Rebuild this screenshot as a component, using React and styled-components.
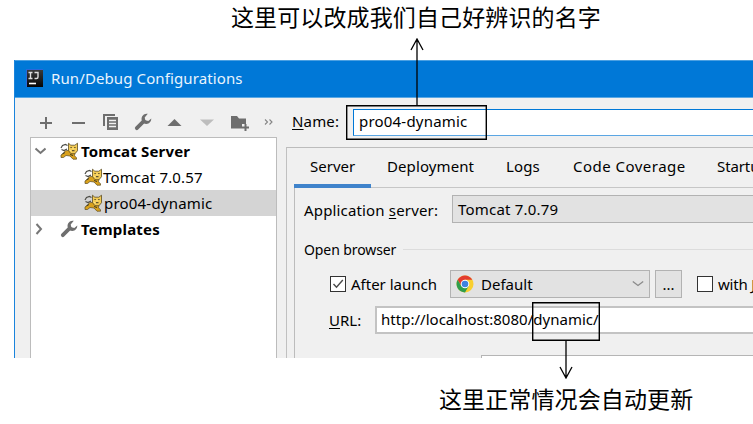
import React from 'react';
import styled, { createGlobalStyle } from 'styled-components';

const GlobalStyle = createGlobalStyle`
  * { box-sizing: border-box; }
  body { margin: 0; background: #fff; overflow: hidden; }
`;

const Page = styled.div`
  position: relative;
  width: 753px;
  height: 424px;
  overflow: hidden;
  background: #fff;
  color: #000;
  font: 15px/20px "Noto Sans", "Noto Sans CJK SC", sans-serif;
`;

const Caption = styled.div`
  height: ${p => p.$height}px;
  padding: ${p => p.$top}px 0 0 ${p => p.$left}px;
  font: 23px/26px "Noto Sans CJK SC", sans-serif;
  letter-spacing: 0.12px;
  white-space: nowrap;
`;

const Dialog = styled.section`
  width: 739px;
  height: 298px;
  margin-left: 14px;
  display: flex;
  flex-direction: column;
  overflow: hidden;
  background: #f0f0f0;
  border-left: 1px solid #1a84dc;
`;

const TitleBar = styled.header`
  flex: none;
  height: 38px;
  margin-left: -1px;
  padding: 0 0 2px 12px;
  display: flex;
  align-items: center;
  gap: 8px;
  background: #0078d7;
  border-top: 1px solid #4ba0e2;
  border-bottom: 1px solid #5aa8e4;
  color: #e9f4fd;
`;

const Body = styled.div`
  flex: 1;
  display: flex;
  min-height: 0;
`;

const Sidebar = styled.aside`
  flex: none;
  width: 247px;
  margin-left: 15px;
  display: flex;
  flex-direction: column;
`;

const Toolbar = styled.div`
  height: 39px;
  padding: 14px 0 0 9px;
  display: flex;
  color: #6e6e6e;
`;

const Tool = styled.span`
  flex: none;
  width: ${p => p.$width || 32.2}px;
  height: 20px;
  svg { display: block; }
`;

const Tree = styled.div`
  flex: 1;
  background: #fff;
  border: 1px solid #bcbcbc;
  border-bottom: 0;
`;

const TreeRow = styled.div`
  height: 26px;
  display: flex;
  align-items: center;
  padding-left: ${p => (p.$child ? 53 : 3)}px;
  background: ${p => (p.$selected ? '#d4d4d4' : 'transparent')};
  font-weight: ${p => (p.$child ? 400 : 700)};
`;

const Twisty = styled.span`
  width: 26px;
  height: 14px;
  svg { display: block; }
`;

const RowIcon = styled.span`
  flex: none;
  width: ${p => p.$width}px;
  height: 18px;
  svg { display: block; }
`;

const Text = styled.span`
  display: block;
  white-space: pre;
  letter-spacing: ${p => p.$track || 0}px;
`;

const Key = styled.span`
  text-decoration: underline;
  text-decoration-thickness: 1px;
  text-underline-offset: 2px;
`;

const Main = styled.main`
  flex: none;
  width: 480px;
  display: flex;
  flex-direction: column;
`;

const NameRow = styled.div`
  flex: none;
  height: 49px;
  padding: 11px 0 0 15px;
  display: flex;
`;

const FieldLabel = styled.label`
  flex: none;
  width: ${p => p.$width}px;
  padding-top: ${p => p.$top}px;
`;

const Field = styled.div`
  flex: 1;
  height: ${p => p.$height}px;
  padding: ${p => p.$pad};
  background: #fff;
  border-style: solid;
  border-width: 2px 0 2px 2px;
  border-color: #c3c3c3;
  display: flex;
`;

const FocusedField = styled(Field)`
  border-width: 1px 0 1px 1px;
  border-color: #0078d7;
  border-bottom-color: #5ba6e3;
`;

const TabPane = styled.div`
  flex: none;
  margin-left: 9px;
  padding-left: 7px;
  border-left: 1px solid #c0c0c0;
  border-top: 1px solid #bcbcbc;
`;

const TabBar = styled.nav`
  height: 40px;
  display: flex;
  border-bottom: 1px solid #c6c6c6;
`;

const Tab = styled.div`
  flex: none;
  height: 40px;
  width: ${p => p.$width}px;
  padding: 8px 0 0 16px;
  border-bottom: 4px solid ${p => (p.$active ? '#3f83cb' : 'transparent')};
`;

const Form = styled.div`
  height: 170px;
  border-left: 1px solid #bcbcbc;
  padding: 7px 0 0 9px;
  display: flex;
  flex-direction: column;
`;

const FormRow = styled.div`
  flex: none;
  height: ${p => p.$height}px;
  padding-left: ${p => p.$indent || 0}px;
  display: flex;
`;

const Button = styled.div`
  flex: none;
  width: ${p => p.$width}px;
  height: 28px;
  padding: 0 ${p => p.$pad || 0}px 0 5px;
  display: flex;
  align-items: center;
  background: #e2e2e2;
  border: 1px solid #b2b2b2;
  svg { flex: none; }
`;

const Grow = styled.span`flex: 1;`;

const BrowserName = styled(Text)`
  margin: 0 0 0 7px;
`;

const Dots = styled(Button)`
  width: 27px;
  height: 28px;
  margin: 0 15px 0 5px;
  padding: 0;
  justify-content: center;
`;

const SectionTitle = styled.div`
  width: 99px;
  font-size: 14px;
`;

const Rule = styled.div`
  flex: 1;
  height: 1px;
  margin-top: 9px;
  background: #dcdcdc;
`;

const Check = styled.span`
  flex: none;
  width: 16px;
  height: 16px;
  margin: 6px 5px 0 0;
  background: #fff;
  border: 1px solid #333;
  svg { display: block; }
`;

const Offset = styled.div`padding-top: ${p => p.$top}px;`;

const NextPanel = styled.div`
  flex: none;
  height: 4px;
  margin-left: 177px;
  background: #fff;
  border-top: 1px solid #b5b5b5;
  border-left: 1px solid #b5b5b5;
`;

const Marker = styled.div`
  position: absolute;
  left: ${p => p.$x}px;
  top: ${p => p.$y}px;
  width: ${p => p.$w}px;
  height: ${p => p.$h}px;
  border: ${p => (p.$plain ? '0' : '1.5px solid #000')};
  box-shadow: ${p => (p.$plain ? 'none' : 'inset 0 0 0 0.4px #000')};
  svg { display: block; }
`;

const IdeaLogo = () => (
  <svg width="17" height="18" viewBox="0 0 17 18">
    <defs>
      <linearGradient id="idea" x1="0" y1="0" x2="0" y2="1">
        <stop offset="0" stopColor="#3a3a3a" /><stop offset="1" stopColor="#050505" />
      </linearGradient>
    </defs>
    <rect x="0" y="0" width="17" height="18" fill="#2a67dc" />
    <rect x="1" y="1" width="16" height="17" fill="url(#idea)" />
    <path d="M2.500 3.500h4M4.500 3.500v6M2.500 9.500h4M8.500 3.500H12v4.500q0 1.500-1.500 1.500H8.500" fill="none" stroke="#ddd" strokeWidth="1.400" />
    <path d="M3 14.500h7" stroke="#fff" strokeWidth="1.600" />
  </svg>
);

const Wrench = () => (
  <svg width="18" height="18" viewBox="0 0 18 18">
    <path d="M2.800 15.200L9.800 8.200" stroke="#6e6e6e" strokeWidth="3.800" strokeLinecap="round" />
    <path d="M13.800.8a5.200 5.200 0 0 0-6 6.700 5 5 0 0 0 4.600 3.500c2.900 0 5-2.400 4.900-5.600l-3 2.600-3-.8-.6-2.700z" fill="#6e6e6e" />
  </svg>
);

const Cat = () => (
  <svg width="19" height="18" viewBox="0 0 19 18">
    <path d="M7.500 3.500L5.500 2.500 2.500 3.500 1 6M1.500 7.500L4 8.500 7 7" fill="none" stroke="#4b4b45" strokeWidth="1.200" />
    <path d="M9 8.500C6 8.300 4.500 9 4 10.500L1 13v2.500h2.500l2.500-2 4 .5 3 3.200h3.500v-1.400l-2-2 .500-3z" fill="#d9a11c" stroke="#5a4b22" strokeWidth=".7" />
    <path d="M8.500 1.200l2.300 2h4l2.700-2v7.500l-2.500 3h-4l-2.500-3z" fill="#f3cb55" stroke="#5a4b22" strokeWidth=".8" />
    <path d="M10.500 5.500h1.200M14.300 5.500h1.200M12 8.700h2.500M2.500 12l2.500-1.500M10 12.500l3 1" fill="none" stroke="#3d3824" strokeWidth="1" />
    <path d="M12.300 6.800h1.500M9.800 8l1.500 1.200" stroke="#fff0a0" strokeWidth=".8" />
  </svg>
);

const Chrome = () => (
  <svg width="18" height="18" viewBox="0 0 18 18">
    <circle cx="9" cy="9" r="8.500" fill="#f9cf2e" />
    <path d="M9 4.750h7.360A8.500 8.500 0 0 0 1.640 4.750L5.300 11z" fill="#e33b2e" />
    <path d="M1.640 4.750A8.500 8.500 0 0 0 9 17.500L12.700 11.100 5.300 11.100z" fill="#2f9e4d" />
    <circle cx="9" cy="9" r="4.300" fill="#fff" />
    <circle cx="9" cy="9" r="3.300" fill="#3f83e0" />
  </svg>
);

const Chevron = () => (
  <svg width="12" height="8" viewBox="0 0 12 8">
    <path d="M.800 1.500L6 5.500 11.200 1.500" fill="none" stroke="#8a8a8a" strokeWidth="1.300" />
  </svg>
);

const Arrow = ({ length, up }) => (
  <svg width="14" height={length} viewBox={`0 0 14 ${length}`}>
    <path
      d={up ? `M7 1V${length}M1 12L7 1L13 12` : `M7 0V${length - 1}M1 ${length - 12}L7 ${length - 1}L13 ${length - 12}`}
      fill="none" stroke="#000" strokeWidth="1.300"
    />
  </svg>
);

const ToolIcons = () => (
  <Toolbar>
    <Tool><svg width="16" height="20"><path d="M1 11h12M7 5v12" stroke="#6e6e6e" strokeWidth="2" /></svg></Tool>
    <Tool><svg width="16" height="20"><path d="M1 11h13" stroke="#6e6e6e" strokeWidth="2" /></svg></Tool>
    <Tool $width={31}>
      <svg width="17" height="20">
        <path d="M0 2h12v2H2v10H0z" fill="#6e6e6e" />
        <path d="M4 5h11v13H4z" fill="#6e6e6e" />
        <path d="M6 8.500h7M6 11.500h7M6 14.500h7" stroke="#f0f0f0" strokeWidth="1.400" />
      </svg>
    </Tool>
    <Tool $width={33}><Offset $top={1}><Wrench /></Offset></Tool>
    <Tool><svg width="16" height="20"><path d="M.500 14L7.500 7l7 7z" fill="#6e6e6e" /></svg></Tool>
    <Tool $width={31}><svg width="16" height="20"><path d="M0 7.500L7 14l7-6.500z" fill="#bdbdbd" /></svg></Tool>
    <Tool $width={33}>
      <svg width="19" height="20">
        <path d="M0 4h6l2 2.500h7V12h-4v4.500H0z" fill="#6e6e6e" />
        <path d="M14.500 12v7M11 15.500h7" stroke="#6e6e6e" strokeWidth="2" />
      </svg>
    </Tool>
    <Tool $width={12}>
      <svg width="10" height="20"><path d="M1 7.500l2.500 2.500L1 12.500M5.500 7.500L8 10l-2.500 2.500" fill="none" stroke="#858585" strokeWidth="1.100" /></svg>
    </Tool>
  </Toolbar>
);

export default function App() {
  return (
    <Page>
      <GlobalStyle />
      <Caption $height={60} $top={3} $left={231}>这里可以改成我们自己好辨识的名字</Caption>
      <Dialog>
        <TitleBar><IdeaLogo /><Text $track={0.11}>Run/Debug Configurations</Text></TitleBar>
        <Body>
          <Sidebar>
            <ToolIcons />
            <Tree>
              <TreeRow>
                <Twisty><svg width="12" height="14"><path d="M1.500 4.500L6.500 9l5-4.500" fill="none" stroke="#777" strokeWidth="2" /></svg></Twisty>
                <RowIcon $width={21}><Cat /></RowIcon>
                <Text $track={0.18}>Tomcat Server</Text>
              </TreeRow>
              <TreeRow $child>
                <RowIcon $width={19}><Cat /></RowIcon>
                <Text $track={0.16}>Tomcat 7.0.57</Text>
              </TreeRow>
              <TreeRow $child $selected>
                <RowIcon $width={20}><Cat /></RowIcon>
                <Text $track={0.2}>pro04-dynamic</Text>
              </TreeRow>
              <TreeRow>
                <Twisty><svg width="12" height="14"><path d="M2.500 2L7 7l-4.500 5" fill="none" stroke="#777" strokeWidth="2" /></svg></Twisty>
                <RowIcon $width={21}><Wrench /></RowIcon>
                <Text $track={0.2}>Templates</Text>
              </TreeRow>
            </Tree>
          </Sidebar>
          <Main>
            <NameRow>
              <FieldLabel $width={61} $top={2}><Text $track={0.15}><Key>N</Key>ame:</Text></FieldLabel>
              <FocusedField $height={27} $pad="1px 0 0 5px"><Text $track={0.2}>pro04-dynamic</Text></FocusedField>
            </NameRow>
            <TabPane>
              <TabBar>
                <Tab $active $width={77}><Text>Server</Text></Tab>
                <Tab $width={119}><Text $track={0.1}>Deployment</Text></Tab>
                <Tab $width={67}><Text $track={0.15}>Logs</Text></Tab>
                <Tab $width={144}><Text $track={0.48}>Code Coverage</Text></Tab>
                <Tab $width={100}><Text $track={-0.1}>Startup/Connection</Text></Tab>
              </TabBar>
              <Form>
                <FormRow $height={45}>
                  <FieldLabel $width={148} $top={5}><Text $track={0.16}>Application <Key>s</Key>erver:</Text></FieldLabel>
                  <Button $width={320}><Text $track={0.2}>Tomcat 7.0.79</Text></Button>
                </FormRow>
                <FormRow $height={30}>
                  <SectionTitle><Text $track={-0.1}>Open browser</Text></SectionTitle>
                  <Rule />
                </FormRow>
                <FormRow $height={36} $indent={26}>
                  <Check><svg width="14" height="14"><path d="M2.500 7l3 3.200L11.800 3" fill="none" stroke="#4a4a4a" strokeWidth="1.400" /></svg></Check>
                  <FieldLabel $width={99} $top={4}><Text>After launch</Text></FieldLabel>
                  <Button $width={200} $pad={5}>
                    <Chrome />
                    <BrowserName>Default</BrowserName>
                    <Grow />
                    <Chevron />
                  </Button>
                  <Dots><Text>...</Text></Dots>
                  <Check />
                  <FieldLabel $width={50} $top={4}><Text $track={-0.2}>with <Key>JavaScript debugger</Key></Text></FieldLabel>
                </FormRow>
                <FormRow $height={49} $indent={25}>
                  <FieldLabel $width={46} $top={4}><Text><Key>U</Key>RL:</Text></FieldLabel>
                  <Field $height={28} $pad="1px 0 0 4px"><Text $track={0.02}>http://localhost:8080/dynamic/</Text></Field>
                </FormRow>
                <NextPanel />
              </Form>
            </TabPane>
          </Main>
        </Body>
      </Dialog>
      <Caption $height={66} $top={27} $left={439}>这里正常情况会自动更新</Caption>
      <Marker $x={346} $y={105} $w={141} $h={35} />
      <Marker $plain $x={409.5} $y={38} $w={14} $h={67}><Arrow up length={67} /></Marker>
      <Marker $x={532} $y={302} $w={68} $h={39} />
      <Marker $plain $x={559} $y={341} $w={14} $h={38}><Arrow length={38} /></Marker>
    </Page>
  );
}
